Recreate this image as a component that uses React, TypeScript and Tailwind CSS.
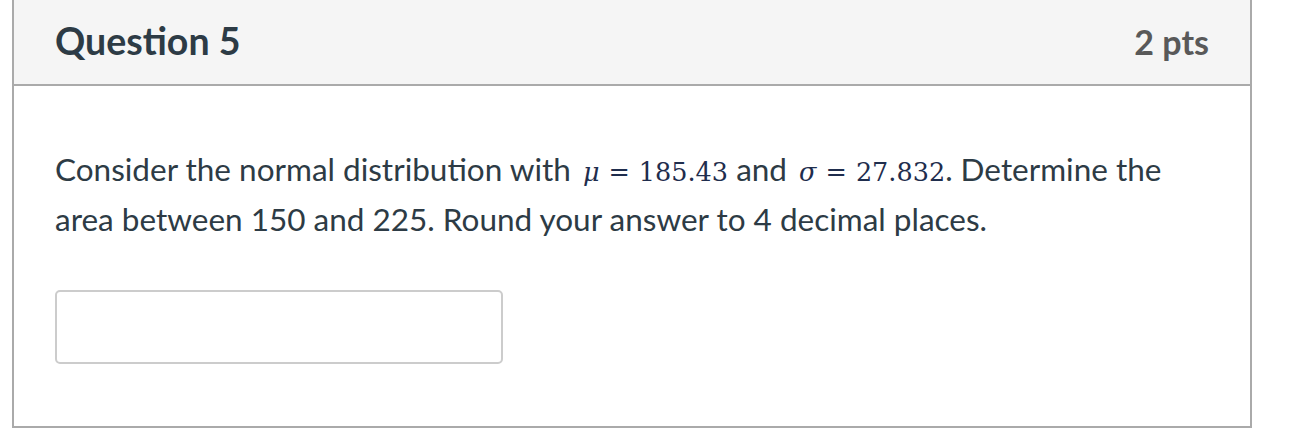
function MathVar({ sym, value }: { sym: string; value: string }) {
  return (
    <span className="font-['DejaVu_Serif',serif] text-[25.5px] text-[#1f2d4d] whitespace-nowrap">
      <i className="ml-[4px]">{sym}</i>
      <span className="mx-[9px]">=</span>
      {value}
    </span>
  );
}

export default function App() {
  return (
    <div className="w-[1308px] h-[436px] bg-white font-['Lato','Liberation_Sans',sans-serif]">
      <div className="ml-[12px] w-[1240px] border-x-2 border-b-2 border-[#aaaaaa] bg-white">
        <div className="h-[86px] bg-[#f5f5f5] border-b-2 border-[#aaaaaa] flex items-center justify-between pl-[41px] pr-[41px] pb-[2px]">
          <h2 className="text-[37.5px] font-bold text-[#2d3b45]">Question 5</h2>
          <div className="text-[34px] font-bold text-[#595959]">2 pts</div>
        </div>
        <div className="pt-[60px] pb-[62px] px-[41px]">
          <p className="text-[31.5px] leading-[47px] text-[#2d3b45]">
            Consider the normal distribution with <MathVar sym="μ" value="185.43" /> and{' '}
            <MathVar sym="σ" value="27.832" />. Determine the area between 150 and 225. Round your answer to 4
            decimal places.
          </p>
          <input
            type="text"
            className="mt-[47px] block w-[448px] h-[74px] border-2 border-[#cccccc] rounded-[5px] bg-white outline-none"
          />
        </div>
      </div>
    </div>
  );
}
